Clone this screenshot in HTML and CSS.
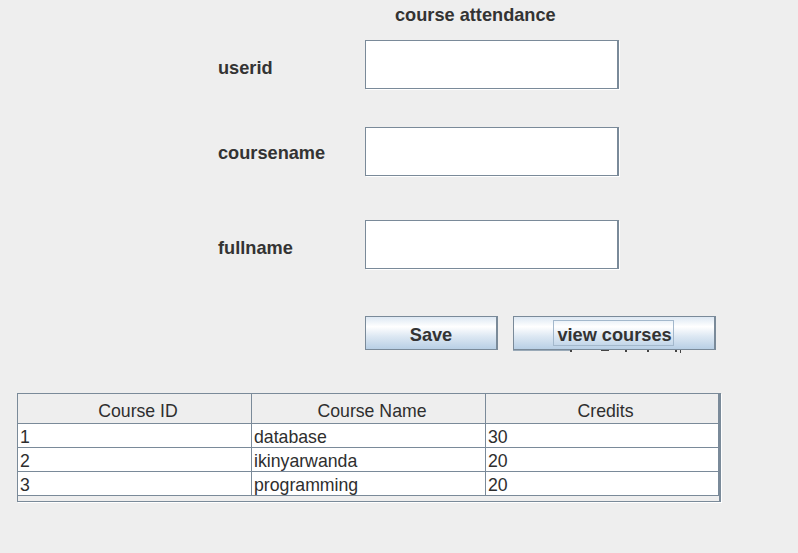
FILE: index.html
```html
<!DOCTYPE html>
<html>
<head>
<meta charset="utf-8">
<link rel="stylesheet" href="styles.css">
</head>
<body>
<div class="frame">
  <div class="title">course attendance</div>
  <div class="form">
    <div class="row row-first">
      <label class="label">userid</label>
      <div class="field"></div>
    </div>
    <div class="row row-second">
      <label class="label label-mid">coursename</label>
      <div class="field"></div>
    </div>
    <div class="row row-third">
      <label class="label">fullname</label>
      <div class="field"></div>
    </div>
  </div>
  <div class="buttons">
    <button class="btn btn-save">Save</button>
    <button class="btn btn-view"><span class="focus">view courses</span></button>
    <div class="ghost">
      <span class="ghost-line"></span>
      <span class="mark m1"></span>
      <span class="mark m2"></span>
      <span class="mark m3"></span>
      <span class="mark m4"></span>
      <span class="mark m5"></span>
      <span class="mark m6"></span>
    </div>
  </div>
  <div class="scroll">
    <div class="grid">
      <div class="th">Course ID</div>
      <div class="th">Course Name</div>
      <div class="th">Credits</div>
      <div class="td">1</div>
      <div class="td">database</div>
      <div class="td">30</div>
      <div class="td">2</div>
      <div class="td">ikinyarwanda</div>
      <div class="td">20</div>
      <div class="td">3</div>
      <div class="td">programming</div>
      <div class="td">20</div>
    </div>
  </div>
</div>
</body>
</html>
```

FILE: styles.css
```css
html, body {
  margin: 0;
  padding: 0;
}
body {
  background: #eeeeee;
  color: #333333;
  font-family: "Liberation Sans", Arial, sans-serif;
  width: 798px;
  height: 553px;
  overflow: hidden;
}
.frame {
  display: flex;
  flex-direction: column;
}
.title {
  padding-top: 5px;
  padding-left: 395px;
  font-size: 18.2px;
  font-weight: bold;
  line-height: 21px;
  height: 21px;
}
.form {
  display: flex;
  flex-direction: column;
  padding-left: 218px;
}
.row {
  display: flex;
  align-items: center;
  height: 49px;
}
.row-first { margin-top: 14px; }
.row-second { margin-top: 38px; }
.row-third { margin-top: 44px; }
.label {
  width: 147px;
  font-size: 18.2px;
  font-weight: bold;
  line-height: 21px;
  padding-top: 8px;
}
.label-mid { padding-top: 3px; }
.field {
  box-sizing: border-box;
  width: 254px;
  height: 49px;
  background: #ffffff;
  border: 1px solid #7a8a99;
  border-right-width: 2px;
  box-shadow: 1px 1px 0 #ffffff;
}
.buttons {
  position: relative;
  display: flex;
  gap: 15px;
  margin-top: 47px;
  padding-left: 365px;
}
.btn {
  box-sizing: border-box;
  height: 34px;
  margin: 0;
  padding: 0;
  border: 1px solid #7a8a99;
  border-right-width: 2px;
  background: linear-gradient(to bottom, #dde8f3 0%, #ffffff 30%, #dde8f3 60%, #b8cfe5 100%);
  color: #333333;
  font-family: "Liberation Sans", Arial, sans-serif;
  font-size: 18.2px;
  font-weight: bold;
  display: flex;
  align-items: center;
  justify-content: center;
}
.btn-save {
  width: 133px;
  padding-top: 4px;
}
.btn-view {
  width: 203px;
}
.focus {
  box-sizing: border-box;
  height: 26px;
  line-height: 24px;
  padding: 2px 1px 0 3px;
  border: 1px solid #a3b8cc;
  margin-left: -1px;
}
.ghost {
  position: absolute;
  left: 513px;
  top: 100%;
  height: 3px;
  width: 200px;
}
.ghost-line {
  position: absolute;
  left: 0;
  top: 0;
  width: 57px;
  height: 1px;
  background: #9aaab8;
}
.mark {
  position: absolute;
  top: 0;
  width: 2px;
  height: 2px;
  background: #444444;
}
.m1 { left: 57px; }
.m2 { left: 88px; width: 8px; height: 1px; }
.m3 { left: 112px; }
.m4 { left: 134px; }
.m5 { left: 162px; }
.m6 { left: 167px; height: 3px; width: 1px; }
.scroll {
  box-sizing: border-box;
  margin-top: 43px;
  margin-left: 17px;
  width: 704px;
  height: 109px;
  border: 1px solid #7a8a99;
  border-right-width: 2px;
  box-shadow: 1px 1px 0 #ffffff;
  background: #eeeeee;
}
.grid {
  display: grid;
  grid-template-columns: 234px 234px 233px;
  grid-template-rows: 30px 24px 24px 24px;
}
.th, .td {
  box-sizing: border-box;
  border-right: 1px solid #7a8a99;
  border-bottom: 1px solid #7a8a99;
  overflow: hidden;
  white-space: nowrap;
  color: #2e2e2e;
  font-size: 17.7px;
}
.th {
  background: #eeeeee;
  text-align: center;
  line-height: 24px;
  padding-top: 5px;
  padding-left: 7px;
}
.td {
  background: #ffffff;
  line-height: 20px;
  padding-left: 2px;
  padding-top: 3px;
}
```
